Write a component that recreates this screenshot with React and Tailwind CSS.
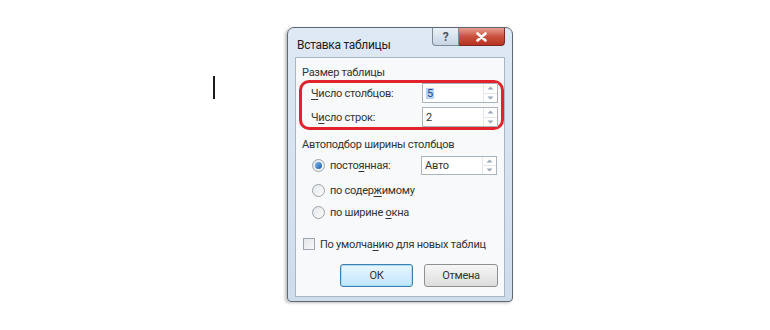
import React from "react";

function Spin() {
  return (
    <div className="w-[14px] h-full flex flex-col border-l border-[#e3e6ea]">
      <div className="flex-1 flex items-center justify-center">
        <svg width="7" height="4" viewBox="0 0 7 4">
          <path d="M0.5 3.5 L3.5 0.5 L6.5 3.5 Z" fill="#9aa6b4" />
        </svg>
      </div>
      <div className="h-px bg-[#e3e6ea]" />
      <div className="flex-1 flex items-center justify-center">
        <svg width="7" height="4" viewBox="0 0 7 4">
          <path d="M0.5 0.5 L3.5 3.5 L6.5 0.5 Z" fill="#9aa6b4" />
        </svg>
      </div>
    </div>
  );
}

function NumBox({ children, h = "h-[20px]" }) {
  return (
    <div className={`w-[76px] ${h} border border-[#abb3bd] bg-white flex items-stretch`}>
      <div className="flex-1 flex items-center pl-[3px]">{children}</div>
      <Spin />
    </div>
  );
}

function Radio({ checked }) {
  return (
    <div className="shrink-0 w-[13px] h-[13px] rounded-full border border-[#9aa3ad] bg-gradient-to-br from-[#e4e7ea] to-[#fbfbfb] flex items-center justify-center">
      {checked && (
        <div className="w-[7px] h-[7px] rounded-full bg-gradient-to-br from-[#7fb7ea] to-[#1d5fae]" />
      )}
    </div>
  );
}

function U({ children }) {
  return <span className="underline underline-offset-2">{children}</span>;
}

export default function App() {
  return (
    <div className="w-[770px] h-[330px] bg-white flex items-start text-[11px] tracking-[-0.25px] leading-none text-[#333] font-['Roboto',sans-serif]">
      <div className="ml-[213px] mt-[76px] w-[2px] h-[23px] bg-[#1c1c1c]" />

      <div className="ml-[72px] mt-[27px] w-[226px] h-[275px] rounded-t-[7px] rounded-b-[4px] border border-[#5f6873] bg-gradient-to-b from-[#dfe9f5] to-[#cfdcec] shadow-[-2px_1px_3px_rgba(0,0,0,0.25)] flex flex-col px-[7px] pb-[4px]">
        <div className="h-[29px] flex items-start">
          <div className="pt-[11px] pl-[2px] text-[12px] tracking-[-0.3px] text-[#1e1e1e]">Вставка таблицы</div>
          <div className="ml-auto flex">
            <div className="w-[27px] h-[18px] border border-[#7d8a99] border-t-0 rounded-bl-[4px] bg-gradient-to-b from-[#eaf0f7] to-[#c9d5e4] flex items-center justify-center text-[12px] text-[#4a5666] font-bold">
              ?
            </div>
            <div className="w-[46px] h-[18px] border border-[#7a2a22] border-t-0 border-l-0 rounded-br-[4px] bg-gradient-to-b from-[#e69d90] via-[#c9513e] to-[#b8321f] flex items-center justify-center">
              <svg width="11" height="10" viewBox="0 0 11 10">
                <path d="M1.5 1.5 L9.5 8.5 M9.5 1.5 L1.5 8.5" stroke="#ffffff" strokeWidth="2.6" strokeLinecap="round" />
              </svg>
            </div>
          </div>
        </div>

        <div className="flex-1 bg-[#f8f9fa] border border-[#a9b6c6] flex flex-col px-[3px]">
          <div className="pl-[3px] pt-[9px] h-[22px]">Размер таблицы</div>

          <div className="w-[205px] h-[50px] rounded-[10px] border-[3px] border-[#e2232b] flex flex-col justify-center gap-[4px] pl-[9px] pr-[3px]">
            <div className="flex items-center">
              <div className="flex-1">
                <U>Ч</U>исло столбцов:
              </div>
              <NumBox>
                <span className="bg-[#b7d2f2] text-[#1c4a9c] px-px">5</span>
              </NumBox>
            </div>
            <div className="flex items-center">
              <div className="flex-1">
                Ч<U>и</U>сло строк:
              </div>
              <NumBox>2</NumBox>
            </div>
          </div>

          <div className="pl-[3px] pt-[9px] h-[26px]">Автоподбор ширины столбцов</div>

          <div className="flex flex-col pl-[13px] pr-[4px] gap-[9px]">
            <div className="flex items-center h-[19px]">
              <Radio checked />
              <div className="ml-[5px] flex-1">
                посто<U>я</U>нная:
              </div>
              <NumBox h="h-[19px]">Авто</NumBox>
            </div>
            <div className="flex items-center h-[13px]">
              <Radio />
              <div className="ml-[5px]">
                по содер<U>ж</U>имому
              </div>
            </div>
            <div className="flex items-center h-[13px]">
              <Radio />
              <div className="ml-[5px]">
                по ширине <U>о</U>кна
              </div>
            </div>
          </div>

          <div className="flex items-center pl-[4px] mt-[19px]">
            <div className="shrink-0 w-[12px] h-[12px] border border-[#9ca5b0] bg-gradient-to-br from-[#e2e5e9] to-[#fafafa]" />
            <div className="ml-[5px] whitespace-nowrap">
              По умолча<U>н</U>ию для новых таблиц
            </div>
          </div>

          <div className="flex justify-end gap-[11px] pr-[3px] mt-[14px]">
            <div className="w-[73px] h-[23px] rounded-[3px] border border-[#3c7fb1] bg-gradient-to-b from-[#eaf6fd] to-[#bee6fd] shadow-[inset_0_0_0_1px_#a9dcf7] flex items-center justify-center">
              ОК
            </div>
            <div className="w-[74px] h-[23px] rounded-[3px] border border-[#8e8f8f] bg-gradient-to-b from-[#f6f6f6] to-[#dddddd] flex items-center justify-center">
              Отмена
            </div>
          </div>
        </div>
      </div>
    </div>
  );
}
